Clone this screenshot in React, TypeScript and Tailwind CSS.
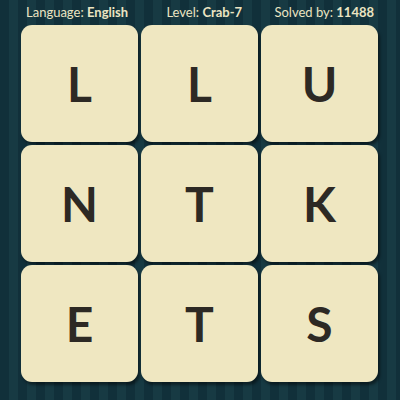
const letters = ['L', 'L', 'U', 'N', 'T', 'K', 'E', 'T', 'S'];

export default function App() {
  return (
    <div
      className="w-[400px] h-[400px] overflow-hidden bg-[#12313a] bg-[repeating-linear-gradient(90deg,#11303a_0px,#11303a_9px,#173a43_9px,#173a43_18px)] flex flex-col"
      style={{ fontFamily: 'Lato, "Open Sans", sans-serif' }}
    >
      {/* Header */}
      <div className="h-[25px] flex items-center justify-between px-[26px] text-[13px] text-[#ebe4c2] leading-none">
        <span>
          Language: <b className="font-bold">English</b>
        </span>
        <span className="ml-[6px]">
          Level: <b className="font-bold">Crab-7</b>
        </span>
        <span>
          Solved by: <b className="font-bold">11488</b>
        </span>
      </div>

      {/* Board */}
      <div className="ml-[21px] grid grid-cols-[repeat(3,117px)] grid-rows-[repeat(3,117px)] gap-[3px]">
        {letters.map((ch, i) => (
          <div
            key={i}
            className="rounded-[11px] bg-[#efe7c1] shadow-[2px_3px_3px_rgba(0,0,0,0.45)] flex items-center justify-center text-[48px] font-bold text-[#2d2924] leading-none"
          >
            {ch}
          </div>
        ))}
      </div>
    </div>
  );
}
